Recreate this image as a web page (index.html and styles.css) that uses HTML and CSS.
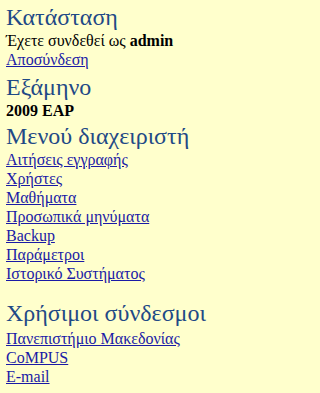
FILE: index.html
```html
<!DOCTYPE html>
<html lang="el">
<head>
<meta charset="utf-8">
<title>Μενού</title>
<link rel="stylesheet" href="styles.css">
</head>
<body>
<div class="sidebar">
  <section class="block block-first">
    <h2 class="block-title">Κατάσταση</h2>
    <p class="line">Έχετε συνδεθεί ως <b>admin</b></p>
    <ul class="links">
      <li><a href="#">Αποσύνδεση</a></li>
    </ul>
  </section>
  <section class="block">
    <h2 class="block-title">Εξάμηνο</h2>
    <p class="line"><b>2009 EAP</b></p>
  </section>
  <section class="block block-menu">
    <h2 class="block-title">Μενού διαχειριστή</h2>
    <ul class="links">
      <li><a href="#">Αιτήσεις εγγραφής</a></li>
      <li><a href="#">Χρήστες</a></li>
      <li><a href="#">Μαθήματα</a></li>
      <li><a href="#">Προσωπικά μηνύματα</a></li>
      <li><a href="#">Backup</a></li>
      <li><a href="#">Παράμετροι</a></li>
      <li><a href="#">Ιστορικό Συστήματος</a></li>
    </ul>
  </section>
  <section class="block block-spaced">
    <h2 class="block-title block-title-loose">Χρήσιμοι σύνδεσμοι</h2>
    <ul class="links">
      <li><a href="#">Πανεπιστήμιο Μακεδονίας</a></li>
      <li><a href="#">CoMPUS</a></li>
      <li><a href="#">E-mail</a></li>
    </ul>
  </section>
</div>
</body>
</html>
```
FILE: styles.css
```css
html, body {
  margin: 0;
  padding: 0;
  background: #ffffcc;
}
body {
  font-family: "Liberation Serif", "Times New Roman", serif;
  font-size: 16px;
  line-height: 19px;
  color: #000;
}
.sidebar {
  padding: 3px 6px;
}
.block {
  margin: 4px 0 0;
}
.block-first {
  margin-top: 0;
}
.block-menu {
  margin-top: 2px;
}
.block-spaced {
  margin-top: 16px;
}
.block-title {
  margin: 0;
  font-weight: normal;
  font-size: 24px;
  line-height: 28px;
  color: #1f4a86;
}
.block-title-loose {
  margin-bottom: 2px;
}
.line {
  margin: 0;
}
.line b {
  font-weight: bold;
}
.links {
  list-style: none;
  margin: 0;
  padding: 0;
}
.links a {
  color: #1a1aa6;
  text-decoration: underline;
}
```
